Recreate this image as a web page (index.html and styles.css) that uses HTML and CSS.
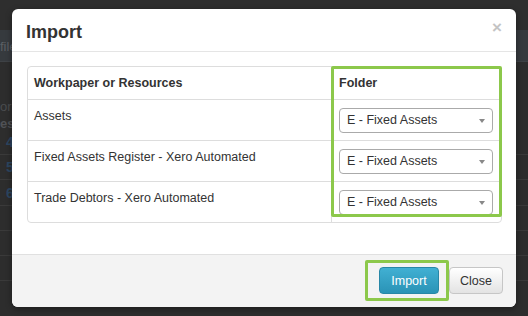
FILE: index.html
```html
<!DOCTYPE html>
<html>
<head>
<meta charset="utf-8">
<link rel="stylesheet" href="styles.css">
</head>
<body>
<div class="page">
  <div class="page-top"></div>
  <div class="page-panel"><span class="panel-text">file</span></div>
  <div class="page-list">
    <div class="list-head"><span class="h1">ork</span><span class="h2">es</span></div>
    <div class="list-row"><span class="num">4</span></div>
    <div class="list-row"><span class="num">5</span></div>
    <div class="list-row tall"><span class="num">6</span></div>
    <div class="list-row"></div>
    <div class="list-row"></div>
    <div class="list-row"></div>
  </div>
</div>

<div class="modal">
  <div class="modal-header">
    <h4 class="modal-title">Import</h4>
    <span class="close-x">×</span>
  </div>
  <div class="modal-body">
    <div class="table-wrap">
      <table class="grid">
        <thead>
          <tr><th class="c1">Workpaper or Resources</th><th class="c2">Folder</th></tr>
        </thead>
        <tbody>
          <tr><td class="c1">Assets</td><td class="c2"><div class="select"><span>E - Fixed Assets</span><span class="caret"></span></div></td></tr>
          <tr><td class="c1">Fixed Assets Register - Xero Automated</td><td class="c2"><div class="select"><span>E - Fixed Assets</span><span class="caret"></span></div></td></tr>
          <tr><td class="c1">Trade Debtors - Xero Automated</td><td class="c2"><div class="select"><span>E - Fixed Assets</span><span class="caret"></span></div></td></tr>
        </tbody>
      </table>
      <div class="hl-folder"></div>
    </div>
  </div>
  <div class="modal-footer">
    <div class="btn-wrap">
      <button class="btn btn-primary">Import</button>
      <div class="hl-btn"></div>
    </div>
    <button class="btn btn-default">Close</button>
  </div>
</div>
</body>
</html>
```

FILE: styles.css
```css
html, body {
  margin: 0;
  padding: 0;
}
body {
  width: 528px;
  height: 316px;
  overflow: hidden;
  background: #2d2d2d;
  font-family: "Liberation Sans", Arial, sans-serif;
  font-size: 12.5px;
  color: #333;
  position: relative;
}

/* dimmed page behind the overlay */
.page {
  width: 528px;
}
.page-top {
  height: 30px;
  background: #2e2e2e;
}
.page-panel {
  height: 32px;
  background: #363a3e;
  display: flex;
  align-items: center;
  border-bottom: 1px solid #3e4246;
  box-sizing: border-box;
}
.panel-text {
  color: #5b5f64;
  font-size: 13px;
  margin-left: 0;
  padding-top: 2px;
}
.page-list {
  padding-top: 36px;
}
.list-head {
  display: flex;
  flex-direction: column;
  font-size: 13px;
  line-height: 17px;
  height: 32px;
  color: #4a4c4f;
}
.h1 {
  margin-left: 0;
}
.h2 {
  font-weight: bold;
  color: #505256;
}
.list-row {
  height: 24px;
  border-bottom: 1px solid #3a3a3a;
  display: flex;
  align-items: center;
}
.list-row.tall {
  height: 25px;
}
.num {
  color: #2c4661;
  font-size: 14px;
  font-weight: bold;
  margin-left: 6px;
}

/* modal overlay */
.modal {
  position: absolute;
  left: 12px;
  top: 9px;
  width: 504px;
  height: 298px;
  background: #fff;
  border-radius: 6px;
  overflow: hidden;
  display: flex;
  flex-direction: column;
  box-shadow: 0 2px 6px rgba(0,0,0,0.4);
}
.modal-header {
  height: 43px;
  border-bottom: 1px solid #e5e5e5;
  display: flex;
  align-items: center;
  justify-content: space-between;
  padding: 0 14px 0 14px;
  box-sizing: border-box;
}
.modal-title {
  margin: 0;
  font-size: 18px;
  font-weight: bold;
  color: #333;
  line-height: 20px;
  padding-top: 3px;
}
.close-x {
  color: #c4c4c4;
  font-size: 17px;
  font-weight: bold;
  margin-top: -5px;
}
.modal-body {
  padding: 14px 14px 0 15px;
  flex: 1;
}
.table-wrap {
  position: relative;
  border: 1px solid #ddd;
  border-radius: 4px;
}
.grid {
  width: 100%;
  border-collapse: separate;
  border-spacing: 0;
}
.grid th, .grid td {
  text-align: left;
  vertical-align: top;
  line-height: 17px;
}
.grid th {
  font-weight: bold;
  padding: 8px 8px 7px 6px;
  border-bottom: 1px solid #ddd;
}
.grid td {
  padding: 8px 8px 7px 6px;
  border-top: 1px solid #ddd;
}
.grid tbody tr:first-child td {
  border-top: none;
}
.grid .c1 {
  width: 289px;
}
.grid .c2 {
  border-left: 1px solid #ddd;
  padding-left: 7px;
}
.select {
  height: 25px;
  box-sizing: border-box;
  border: 1px solid #aaa;
  border-radius: 4px;
  display: flex;
  align-items: center;
  justify-content: space-between;
  padding: 0 7px 0 7px;
  color: #333;
  background: #fff;
}
.caret {
  width: 0;
  height: 0;
  border-left: 3px solid transparent;
  border-right: 3px solid transparent;
  border-top: 4px solid #888;
}
.hl-folder {
  position: absolute;
  left: 303px;
  top: -1px;
  right: -1px;
  height: 151px;
  border: 3px solid #8cc84b;
  border-radius: 2px;
  box-sizing: border-box;
  pointer-events: none;
}

.modal-footer {
  height: 53px;
  box-sizing: border-box;
  background: #f3f3f3;
  border-top: 1px solid #e0e0e0;
  display: flex;
  align-items: center;
  justify-content: flex-end;
  padding: 0 13px 1px 0;
  gap: 10px;
}
.btn-wrap {
  position: relative;
}
.btn {
  font-family: "Liberation Sans", Arial, sans-serif;
  font-size: 12.5px;
  height: 27px;
  border-radius: 4px;
  padding: 0;
  margin: 0;
  cursor: pointer;
  display: block;
}
.btn-primary {
  width: 60px;
  color: #fff;
  background: linear-gradient(#41b0d3, #2a93b6);
  border: 1px solid #2887a7;
}
.btn-default {
  width: 54px;
  color: #333;
  background: linear-gradient(#ffffff, #e3e3e3);
  border: 1px solid #c6c6c6;
}
.hl-btn {
  position: absolute;
  left: -14px;
  top: -7px;
  right: -10px;
  bottom: -7px;
  border: 3px solid #8cc84b;
  border-radius: 2px;
  pointer-events: none;
}
```
